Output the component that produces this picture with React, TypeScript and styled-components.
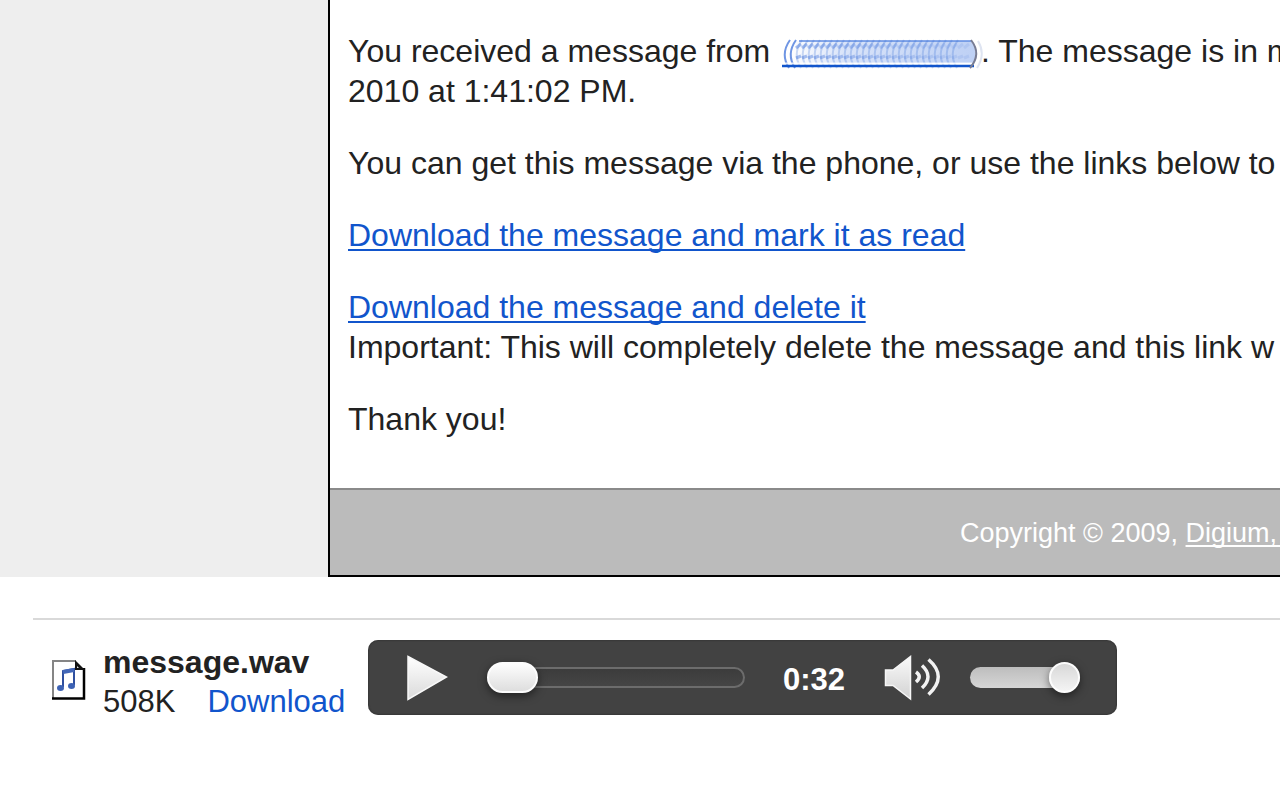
import React from "react";
import styled, { createGlobalStyle } from "styled-components";

const GlobalStyle = createGlobalStyle`
  *, *::before, *::after { box-sizing: border-box; }
  body {
    margin: 0;
    background: #fff;
    color: #222;
    font-family: "Liberation Sans", Arial, sans-serif;
    font-size: 32px;
    line-height: 40px;
    overflow-x: hidden;
  }
`;

const Page = styled.main`
  overflow: hidden;
`;

const Message = styled.section`
  display: grid;
  grid-template-columns: 328px minmax(0, 1fr);
  background: #eee;
`;

const Letter = styled.article`
  grid-column: 2;
  border: solid #000;
  border-width: 0 0 2px 2px;
  background: #fff;
  white-space: nowrap;
  overflow: hidden;
`;

const LetterBody = styled.div`
  display: flex;
  flex-direction: column;
  gap: 32px;
  padding: 31px 0 49px 18px;
`;

const Paragraph = styled.p`
  margin: 0;
`;

const Link = styled.a<{ $plain?: boolean }>`
  color: #15c;
  text-decoration: ${(p) => (p.$plain ? "none" : "underline")};
  text-decoration-thickness: 2px;
  text-decoration-skip-ink: none;
  text-underline-offset: 3px;
`;

const Scribble = styled.svg`
  width: 204px;
  height: 32px;
  margin: 0 -4px 0 2px;
  vertical-align: -9px;
`;

const LetterFooter = styled.footer`
  padding: 23px 0 22px 630px;
  border-top: 2px solid #8a8a8a;
  background: #bbb;
  color: #fff;
  font-size: 27px;
`;

const FooterLink = styled(Link)`
  color: #fff;
`;

const Attachment = styled.section`
  display: flex;
  align-items: flex-start;
  margin: 41px 0 0 33px;
  padding: 20px 0 0 18px;
  border-top: 2px solid #d9d9d9;
`;

const FileIcon = styled.svg`
  flex: none;
  width: 36px;
  height: 42px;
  margin: 19px 16px 0 0;
`;

const FileInfo = styled.div`
  flex: none;
  width: 265px;
  padding-top: 2px;
  white-space: nowrap;
`;

const FileName = styled.div`
  font-weight: bold;
`;

const FileMeta = styled.div`
  display: flex;
  gap: 32px;
  font-size: 31px;
`;

const Player = styled.div`
  display: flex;
  flex: none;
  align-items: center;
  height: 75px;
  padding: 0 37px 0 39px;
  border-radius: 10px;
  background: #424242;
  box-shadow: inset 0 0 2px #222;
`;

const IconButton = styled.button`
  display: flex;
  padding: 0;
  border: 0;
  background: none;
`;

const Slider = styled.input<{ $length: number; $thumb: number; $filled?: boolean }>`
  appearance: none;
  width: ${(p) => p.$length}px;
  height: 31px;
  margin: 0;
  background: none;

  &::-webkit-slider-runnable-track {
    height: 21px;
    border-radius: 11px;
    background: ${(p) => (p.$filled ? "linear-gradient(#bdbdbd, #d6d6d6)" : "linear-gradient(#3b3b3b, #464646)")};
    box-shadow: ${(p) => (p.$filled ? "none" : "inset 0 0 0 2px #6c6c6c")};
  }

  &::-webkit-slider-thumb {
    appearance: none;
    width: ${(p) => p.$thumb}px;
    height: 31px;
    margin-top: -5px;
    border: 2px solid #fcfcfc;
    border-radius: 16px;
    background: ${(p) => (p.$filled ? "linear-gradient(#d8d8d8, #f4f4f4)" : "linear-gradient(#fdfdfd, #dedede)")};
    box-shadow: 0 3px 9px rgba(0, 0, 0, 0.5);
  }
`;

const Time = styled.time`
  width: 101px;
  padding-top: 4px;
  color: #fff;
  font-size: 31px;
  font-weight: bold;
`;

const PlayButton = styled(IconButton)`
  margin-right: 39px;
`;

const SeekSlider = styled(Slider)`
  margin-right: 38px;
`;

const MuteButton = styled(IconButton)`
  margin-right: 29px;
`;

const strokes = Array.from({ length: 29 }, (_, i) => i);

function HiddenCaller() {
  return (
    <Scribble viewBox="0 0 204 32" role="img" aria-label="Caller">
      <defs>
        <linearGradient id="haze" x1="0" x2="1" y1="0" y2="0">
          <stop offset="0" stopColor="#7da2ea" stopOpacity="0" />
          <stop offset="0.3" stopColor="#7da2ea" stopOpacity="0.3" />
          <stop offset="1" stopColor="#7da2ea" stopOpacity="0.5" />
        </linearGradient>
      </defs>
      <path d="M10 2H190Q198 12 192 24H10Q6 14 10 2Z" fill="url(#haze)" />
      <path d="M18 2H190" stroke="#5f8ce2" strokeWidth="2" opacity="0.75" />
      {strokes.map((i) => (
        <path
          key={`arc${i}`}
          d={`M${9 + i * 6} 1Q${-1 + i * 6} 15 ${8 + i * 6} 29`}
          fill="none"
          stroke="#3f72da"
          strokeWidth="2"
          opacity={i < 2 ? 0.75 : 0.26}
        />
      ))}
      {strokes.map((i) => (
        <path
          key={`dash${i}`}
          d={`M${15 + i * 6} 9l5 -4M${15 + i * 6} 19l5 -2`}
          stroke="#3f72da"
          strokeWidth="3"
          opacity={0.45 - i * 0.012}
        />
      ))}
      <path d="M4 24.500H192" stroke="#fff" strokeWidth="2" opacity="0.8" />
      <path d="M1 27H193" stroke="#15c" strokeWidth="2.500" />
      <path d="M190 1Q201 15 189 29" fill="none" stroke="#777c94" strokeWidth="2" />
      <path d="M197 2Q205 15 196 29" fill="none" stroke="#bdc9e4" strokeWidth="2" opacity="0.5" />
    </Scribble>
  );
}

function AudioFileIcon() {
  return (
    <FileIcon viewBox="0 0 36 42" aria-hidden="true">
      <path d="M2 2H25L33 10V40H2Z" fill="#fff" />
      <path d="M2 40V2H25" fill="none" stroke="#858585" strokeWidth="2" />
      <path d="M1 39.500H33V9" fill="none" stroke="#000" strokeWidth="2.500" />
      <path d="M24 1L34 11H24Z" fill="#111" />
      <path d="M26 7l2 2h-2z" fill="#ddd" />
      <path d="M12 28V12L23 10V26" fill="none" stroke="#2f4f9f" strokeWidth="2" />
      <path d="M12 13L23 11" stroke="#4468b8" strokeWidth="4" />
      <ellipse cx="9.500" cy="29" rx="3.500" ry="3" fill="#3d62b4" />
      <ellipse cx="20.500" cy="27" rx="3.500" ry="3" fill="#3d62b4" />
    </FileIcon>
  );
}

function PlayIcon() {
  return (
    <svg width="41" height="46" viewBox="0 0 41 46" aria-hidden="true">
      <defs>
        <linearGradient id="play" x1="0" x2="0" y1="0" y2="1">
          <stop offset="0" stopColor="#fff" />
          <stop offset="1" stopColor="#dadada" />
        </linearGradient>
      </defs>
      <path d="M1 1.500L39.500 22L1 44.500Z" fill="url(#play)" stroke="#f8f8f8" strokeWidth="1.500" />
    </svg>
  );
}

function SpeakerIcon() {
  return (
    <svg width="57" height="46" viewBox="0 0 57 46" aria-hidden="true">
      <defs>
        <linearGradient id="cone" x1="0" x2="0" y1="0" y2="1">
          <stop offset="0" stopColor="#fafafa" />
          <stop offset="1" stopColor="#d2d2d2" />
        </linearGradient>
      </defs>
      <path d="M1.500 15H9L26.500 1.500V44L9 30.500H1.500Z" fill="url(#cone)" stroke="#f6f6f6" strokeWidth="1.500" />
      <path
        d="M32 17Q38.500 21.500 32 27M38 10.500Q50 21.500 38 33M44.500 4.500Q64 21.500 44.500 39.500"
        fill="none"
        stroke="#f2f2f2"
        strokeWidth="3.500"
      />
    </svg>
  );
}

export default function App() {
  return (
    <>
      <GlobalStyle />
      <Page>
        <Message>
          <Letter>
            <LetterBody>
              <Paragraph>
                You received a message from <HiddenCaller />. The message is in m
                <br />
                2010 at 1:41:02 PM.
              </Paragraph>
              <Paragraph>You can get this message via the phone, or use the links below to</Paragraph>
              <Paragraph>
                <Link href="#read">Download the message and mark it as read</Link>
              </Paragraph>
              <Paragraph>
                <Link href="#delete">Download the message and delete it</Link>
                <br />
                Important: This will completely delete the message and this link w
              </Paragraph>
              <Paragraph>Thank you!</Paragraph>
            </LetterBody>
            <LetterFooter>
              Copyright © 2009, <FooterLink href="#digium">Digium,&nbsp;</FooterLink>
            </LetterFooter>
          </Letter>
        </Message>
        <Attachment>
          <AudioFileIcon />
          <FileInfo>
            <FileName>message.wav</FileName>
            <FileMeta>
              <span>508K</span>
              <Link $plain href="#download">Download</Link>
            </FileMeta>
          </FileInfo>
          <Player>
            <PlayButton aria-label="Play">
              <PlayIcon />
            </PlayButton>
            <SeekSlider type="range" aria-label="Seek" defaultValue={0} $length={258} $thumb={51} />
            <Time>0:32</Time>
            <MuteButton aria-label="Mute">
              <SpeakerIcon />
            </MuteButton>
            <Slider type="range" aria-label="Volume" defaultValue={100} $length={110} $thumb={31} $filled />
          </Player>
        </Attachment>
      </Page>
    </>
  );
}
